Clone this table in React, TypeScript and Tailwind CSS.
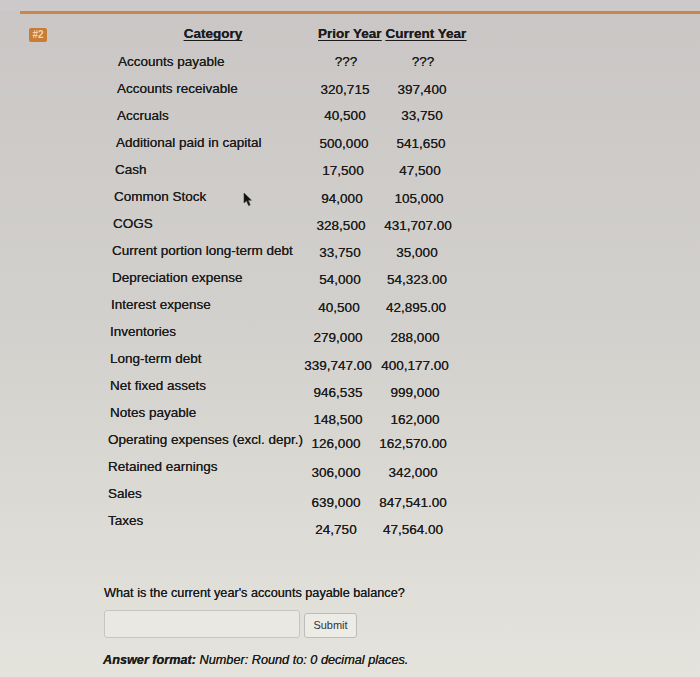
type Row = {
  label: string
  prior: string
  current: string
  offset: string
  drop: string
}

// the screen was photographed at a slight angle, so each row sits a little left and lower than the previous one
const rows: Row[] = [
  { label: 'Accounts payable', prior: '???', current: '???', offset: 'ml-[118px]', drop: 'pt-[0px]' },
  { label: 'Accounts receivable', prior: '320,715', current: '397,400', offset: 'ml-[117px]', drop: 'pt-[1px]' },
  { label: 'Accruals', prior: '40,500', current: '33,750', offset: 'ml-[117px]', drop: 'pt-[0px]' },
  { label: 'Additional paid in capital', prior: '500,000', current: '541,650', offset: 'ml-[116px]', drop: 'pt-[1px]' },
  { label: 'Cash', prior: '17,500', current: '47,500', offset: 'ml-[115px]', drop: 'pt-[1px]' },
  { label: 'Common Stock', prior: '94,000', current: '105,000', offset: 'ml-[114px]', drop: 'pt-[2px]' },
  { label: 'COGS', prior: '328,500', current: '431,707.00', offset: 'ml-[113px]', drop: 'pt-[2px]' },
  { label: 'Current portion long-term debt', prior: '33,750', current: '35,000', offset: 'ml-[112px]', drop: 'pt-[2px]' },
  { label: 'Depreciation expense', prior: '54,000', current: '54,323.00', offset: 'ml-[112px]', drop: 'pt-[2px]' },
  { label: 'Interest expense', prior: '40,500', current: '42,895.00', offset: 'ml-[111px]', drop: 'pt-[3px]' },
  { label: 'Inventories', prior: '279,000', current: '288,000', offset: 'ml-[110px]', drop: 'pt-[6px]' },
  { label: 'Long-term debt', prior: '339,747.00', current: '400,177.00', offset: 'ml-[110px]', drop: 'pt-[7px]' },
  { label: 'Net fixed assets', prior: '946,535', current: '999,000', offset: 'ml-[110px]', drop: 'pt-[7px]' },
  { label: 'Notes payable', prior: '148,500', current: '162,000', offset: 'ml-[110px]', drop: 'pt-[7px]' },
  { label: 'Operating expenses (excl. depr.)', prior: '126,000', current: '162,570.00', offset: 'ml-[108px]', drop: 'pt-[4px]' },
  { label: 'Retained earnings', prior: '306,000', current: '342,000', offset: 'ml-[108px]', drop: 'pt-[6px]' },
  { label: 'Sales', prior: '639,000', current: '847,541.00', offset: 'ml-[108px]', drop: 'pt-[9px]' },
  { label: 'Taxes', prior: '24,750', current: '47,564.00', offset: 'ml-[108px]', drop: 'pt-[9px]' },
]

function Cursor() {
  return (
    <svg width="10" height="15" viewBox="0 0 10 15" className="absolute left-[129px] top-[9px]">
      <path d="M1 1 L1 11 L3.5 8.8 L5.6 13.6 L7.2 12.9 L5.2 8.2 L8.4 8.2 Z" fill="#111" stroke="#333" strokeWidth="0.6" />
    </svg>
  )
}

export default function App() {
  return (
    <div className="w-[700px] h-[677px] overflow-hidden bg-linear-to-b from-[#c9c6c5] via-[#d3d1cd] to-[#e4e3dc] text-[#1c1c1c] [text-shadow:0_0_0.5px_#2a2a2a] font-['Liberation_Sans',Arial,sans-serif]">
      <div className="h-[11px] bg-[#cdc9ca]" />
      <div className="ml-[20px] h-[3px] bg-[#c98849]" />

      <div className="mt-[7px] flex h-[27px] items-center">
        <span className="ml-[29px] flex h-[14px] w-[18px] items-center justify-center rounded-[2px] bg-[#c97c34] text-[10px] font-bold text-[#f0d6b8] [text-shadow:none]">
          #2
        </span>
        <div className="ml-[71px] flex items-center text-[13.5px] font-bold">
          <span className="w-[190px] text-center underline underline-offset-2">Category</span>
          <span className="ml-[10px] underline underline-offset-2">Prior Year</span>
          <span className="ml-[4px] underline underline-offset-2">Current Year</span>
        </div>
      </div>

      <div className="text-[13.5px]">
        {rows.map(r => (
          <div key={r.label} className={`relative flex h-[27px] ${r.offset}`}>
            <span className="w-[190px] shrink-0 whitespace-nowrap leading-[27px]">{r.label}</span>
            <div className={`flex ${r.drop}`}>
              <span className="w-[76px] text-center leading-[27px]">{r.prior}</span>
              <span className="w-[78px] text-center leading-[27px]">{r.current}</span>
            </div>
            {r.label === 'Common Stock' && <Cursor />}
          </div>
        ))}
      </div>

      <p className="ml-[104px] mt-[49px] text-[12.7px] leading-[20px]">
        What is the current year's accounts payable balance?
      </p>
      <div className="ml-[104px] mt-[7px] flex items-end gap-[4px]">
        <input className="h-[28px] w-[196px] rounded-[3px] border border-[#c6c5c0] bg-[#e9e8e3] outline-none" />
        <button className="h-[25px] w-[53px] rounded-[3px] border border-[#bdbcb7] bg-[#ecebe6] text-[11px] text-[#333]">
          Submit
        </button>
      </div>
      <p className="ml-[103px] mt-[12px] text-[12.7px] italic leading-[20px]">
        <span className="font-bold">Answer format:</span> Number: Round to: 0 decimal places.
      </p>
    </div>
  )
}
